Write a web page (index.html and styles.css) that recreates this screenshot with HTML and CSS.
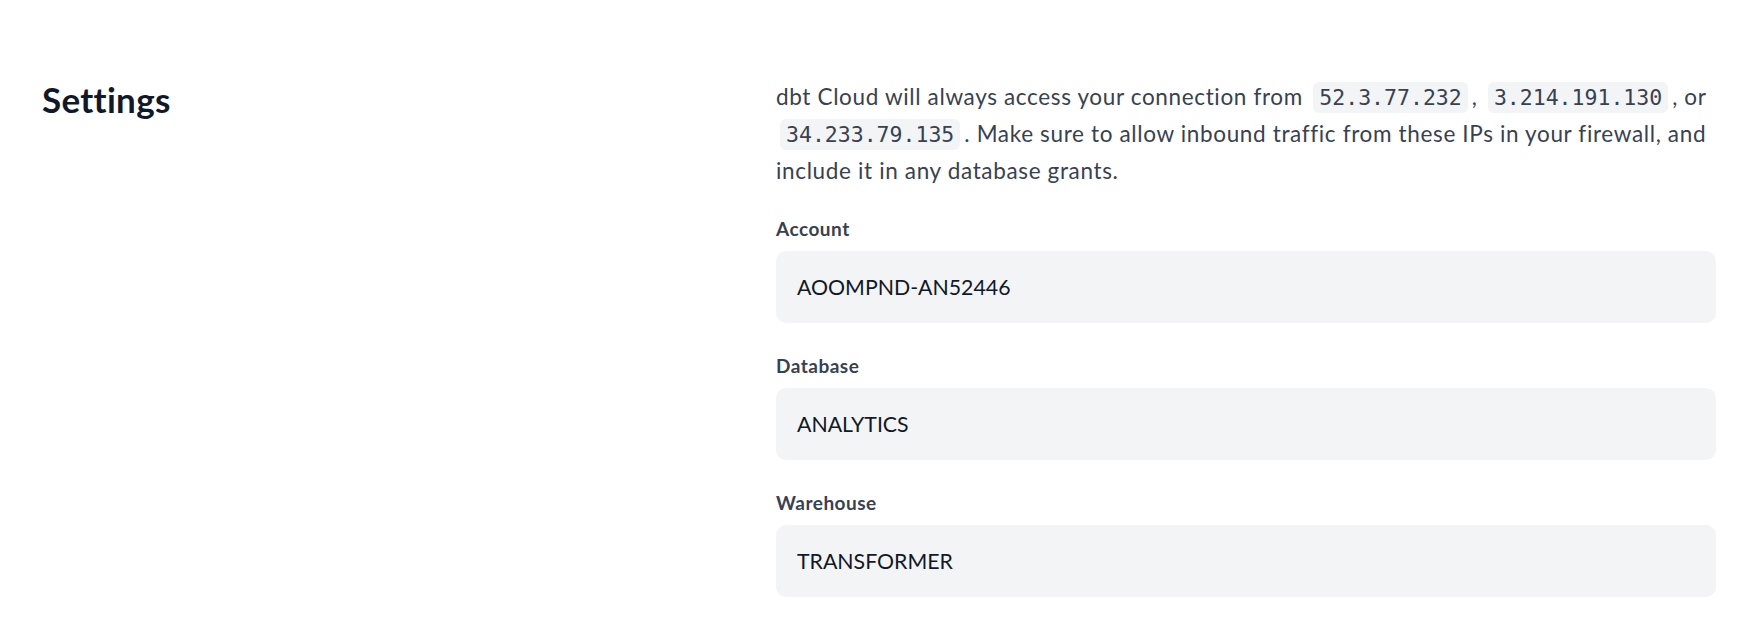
FILE: index.html
```html
<!DOCTYPE html>
<html lang="en">
<head>
<meta charset="utf-8">
<title>Settings</title>
<link rel="stylesheet" href="styles.css">
</head>
<body>
<section class="settings">
  <h2 class="settings-title">Settings</h2>
  <div class="settings-body">
    <p class="note">dbt Cloud will always access your connection from <code class="ip">52.3.77.232</code>, <code class="ip">3.214.191.130</code>, or <code class="ip">34.233.79.135</code>. Make sure to allow inbound traffic from these IPs in your firewall, and include it in any database grants.</p>
    <div class="field">
      <label class="field-label">Account</label>
      <div class="field-input">AOOMPND-AN52446</div>
    </div>
    <div class="field">
      <label class="field-label">Database</label>
      <div class="field-input">ANALYTICS</div>
    </div>
    <div class="field">
      <label class="field-label">Warehouse</label>
      <div class="field-input">TRANSFORMER</div>
    </div>
  </div>
</section>
</body>
</html>
```
FILE: styles.css
```css
html, body {
  margin: 0;
  padding: 0;
  background: #ffffff;
}
body {
  font-family: Lato, "Noto Sans", sans-serif;
  color: #374151;
}
.settings {
  display: grid;
  grid-template-columns: 734px 940px;
  padding: 0 46px 0 42px;
}
.settings-title {
  margin: 79px 0 0;
  font-size: 35px;
  line-height: 40px;
  letter-spacing: 0.3px;
  font-weight: 700;
  color: #111827;
}
.settings-body {
  display: flex;
  flex-direction: column;
  padding-top: 79px;
}
.note {
  margin: 0 0 28px;
  font-size: 22.5px;
  line-height: 36px;
  letter-spacing: 0.65px;
  color: #374151;
}
.ip {
  font-family: "DejaVu Sans Mono", "Liberation Mono", monospace;
  font-size: 21.5px;
  letter-spacing: 0;
  background: #f3f4f6;
  color: #374151;
  border-radius: 6px;
  padding: 3px 6px;
  margin: 0 4px;
}
.field {
  display: flex;
  flex-direction: column;
  gap: 10px;
  margin-bottom: 31px;
}
.field-label {
  font-size: 19px;
  line-height: 24px;
  letter-spacing: 0.5px;
  font-weight: 700;
  color: #374151;
}
.field-input {
  height: 72px;
  box-sizing: border-box;
  display: flex;
  align-items: center;
  padding: 0 21px;
  background: #f3f4f6;
  border-radius: 10px;
  font-size: 21.3px;
  color: #111827;
}
```
